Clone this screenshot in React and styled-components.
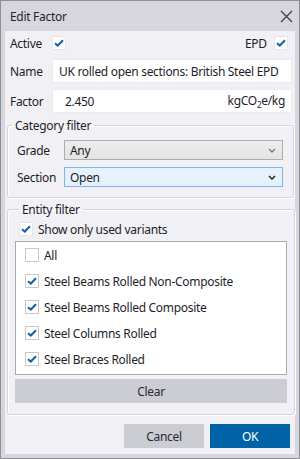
import React from 'react'
import styled, { createGlobalStyle } from 'styled-components'

const Global = createGlobalStyle`
  html, body { margin: 0; padding: 0; background: #fff; }
  body {
    font-family: "Segoe UI", "Noto Sans", sans-serif;
    font-size: 12px;
    letter-spacing: -0.3px;
    color: #1e1e2a;
  }
  * { box-sizing: border-box; }
`

const Window = styled.div`
  width: 300px;
  height: 459px;
  border: 1px solid #8f8f98;
  background: #d6d6dc;
  display: flex;
  flex-direction: column;
`

const TitleBar = styled.div`
  height: 30px;
  display: flex;
  align-items: center;
  justify-content: space-between;
  padding: 0 6px 0 9px;
  color: #1f1f2e;
`

const Body = styled.div`
  flex: 1;
  margin: 0 4px 4px;
  background: #f0f0f5;
  padding: 5px 0 6px;
  display: flex;
  flex-direction: column;
`

const Row = styled.div`
  display: flex;
  align-items: center;
  padding: 0 3px 0 5px;
  margin-top: ${p => p.$top || 0}px;
  height: ${p => p.$h || 24}px;
`

const Label = styled.span`
  width: ${p => p.$w || 42}px;
  flex: none;
  white-space: nowrap;
`

const Spacer = styled.div`
  flex: 1;
`

const Box = styled.span`
  width: 14px;
  height: 14px;
  flex: none;
  background: #fff;
  border: 1px solid ${p => p.$border ? '#c8c8cc' : '#e6e6ea'};
  display: inline-flex;
  align-items: center;
  justify-content: center;
`

const Check = ({ on, border }) => (
  <Box $border={border}>
    {on && (
      <svg width="10" height="8" viewBox="0 0 10 8">
        <path d="M1 4.2 L3.8 6.6 L9 1.2" fill="none" stroke="#1b63a4" strokeWidth="2.1" />
      </svg>
    )}
  </Box>
)

const Input = styled.div`
  flex: 1;
  height: 24px;
  background: #fff;
  border: 1px solid #ececf0;
  display: flex;
  align-items: center;
  justify-content: space-between;
  padding: 0 6px 0 ${p => p.$pl || 6}px;
  white-space: nowrap;
`

const Group = styled.fieldset`
  margin: ${p => p.$top}px 1px 0 2px;
  padding: ${p => p.$pad};
  border: 1px solid #d2d6dc;
  box-shadow: inset 1px 1px 0 #fff, 1px 1px 0 #fff;
  border-radius: 3px;
  display: flex;
  flex-direction: column;
`

const Legend = styled.legend`
  padding: 0 3px;
  margin-left: 4px;
`

const SelectRow = styled.div`
  display: flex;
  align-items: center;
  height: 20px;
  margin-top: ${p => p.$top || 0}px;
  padding-left: 9px;
`

const Select = styled.div`
  flex: 1;
  height: 20px;
  display: flex;
  align-items: center;
  justify-content: space-between;
  padding: 0 6px 0 5px;
  border: 1px solid ${p => p.$active ? '#7eb4ea' : '#adadad'};
  background: ${p => p.$active ? '#e5f1fb' : 'linear-gradient(#ececec, #e4e4e4)'};
`

const Chevron = ({ dark }) => (
  <svg width="8" height="5" viewBox="0 0 8 5">
    <path d="M1 1 L4 4 L7 1" fill="none" stroke={dark ? '#1a1a1a' : '#7a7a7a'} strokeWidth="1.3" />
  </svg>
)

const CheckLine = styled.label`
  display: flex;
  align-items: center;
  gap: 5px;
  height: 14px;
  margin: ${p => p.$m || '0'};
  white-space: nowrap;
`

const List = styled.div`
  margin-top: 5px;
  height: 134px;
  background: #fff;
  border: 1px solid #a8a8ae;
  padding: 6px 9px;
  display: flex;
  flex-direction: column;
  gap: 12px;
`

const Button = styled.div`
  height: 24px;
  flex: none;
  width: ${p => p.$w || 80}px;
  display: flex;
  align-items: center;
  justify-content: center;
  margin-top: ${p => p.$top || 0}px;
  background: ${p => p.$primary ? '#0063a7' : '#ccccd3'};
  color: ${p => p.$primary ? '#fff' : '#2a2a36'};
`

const Footer = styled.div`
  margin-top: auto;
  display: flex;
  justify-content: flex-end;
  gap: 6px;
  padding-right: 5px;
`

const items = [
  ['All', false],
  ['Steel Beams Rolled Non-Composite', true],
  ['Steel Beams Rolled Composite', true],
  ['Steel Columns Rolled', true],
  ['Steel Braces Rolled', true],
]

export default function App() {
  return (
    <Window>
      <Global />
      <TitleBar>
        <span>Edit Factor</span>
        <svg width="13" height="13" viewBox="0 0 13 13">
          <path d="M1 1 L12 12 M12 1 L1 12" stroke="#3a3a44" strokeWidth="1.2" />
        </svg>
      </TitleBar>
      <Body>
        <Row $h={14}>
          <Label>Active</Label>
          <Check on />
          <Spacer />
          <Label $w={29}>EPD</Label>
          <Check on />
          <span style={{ width: 4 }} />
        </Row>
        <Row $top={9}>
          <Label>Name</Label>
          <Input>UK rolled open sections: British Steel EPD</Input>
        </Row>
        <Row $top={6}>
          <Label>Factor</Label>
          <Input $pl={12}>
            <span>2.450</span>
            <span>kgCO<sub style={{ fontSize: 8 }}>2</sub>e/kg</span>
          </Input>
        </Row>
        <Group $top={4} $pad="6px 10px 10px 0">
          <Legend>Category filter</Legend>
          <SelectRow>
            <Label $w={47}>Grade</Label>
            <Select>Any<Chevron /></Select>
          </SelectRow>
          <SelectRow $top={7}>
            <Label $w={47}>Section</Label>
            <Select $active>Open<Chevron dark /></Select>
          </SelectRow>
        </Group>
        <Group $top={3} $pad="4px 7px 11px 7px">
          <Legend>Entity filter</Legend>
          <CheckLine $m="0 0 0 4px">
            <Check on />
            Show only used variants
          </CheckLine>
          <List>
            {items.map(([t, on]) => (
              <CheckLine key={t}>
                <Check on={on} border />
                {t}
              </CheckLine>
            ))}
          </List>
          <Button $w={272} $top={4}>Clear</Button>
        </Group>
        <Footer>
          <Button>Cancel</Button>
          <Button $primary>OK</Button>
        </Footer>
      </Body>
    </Window>
  )
}
